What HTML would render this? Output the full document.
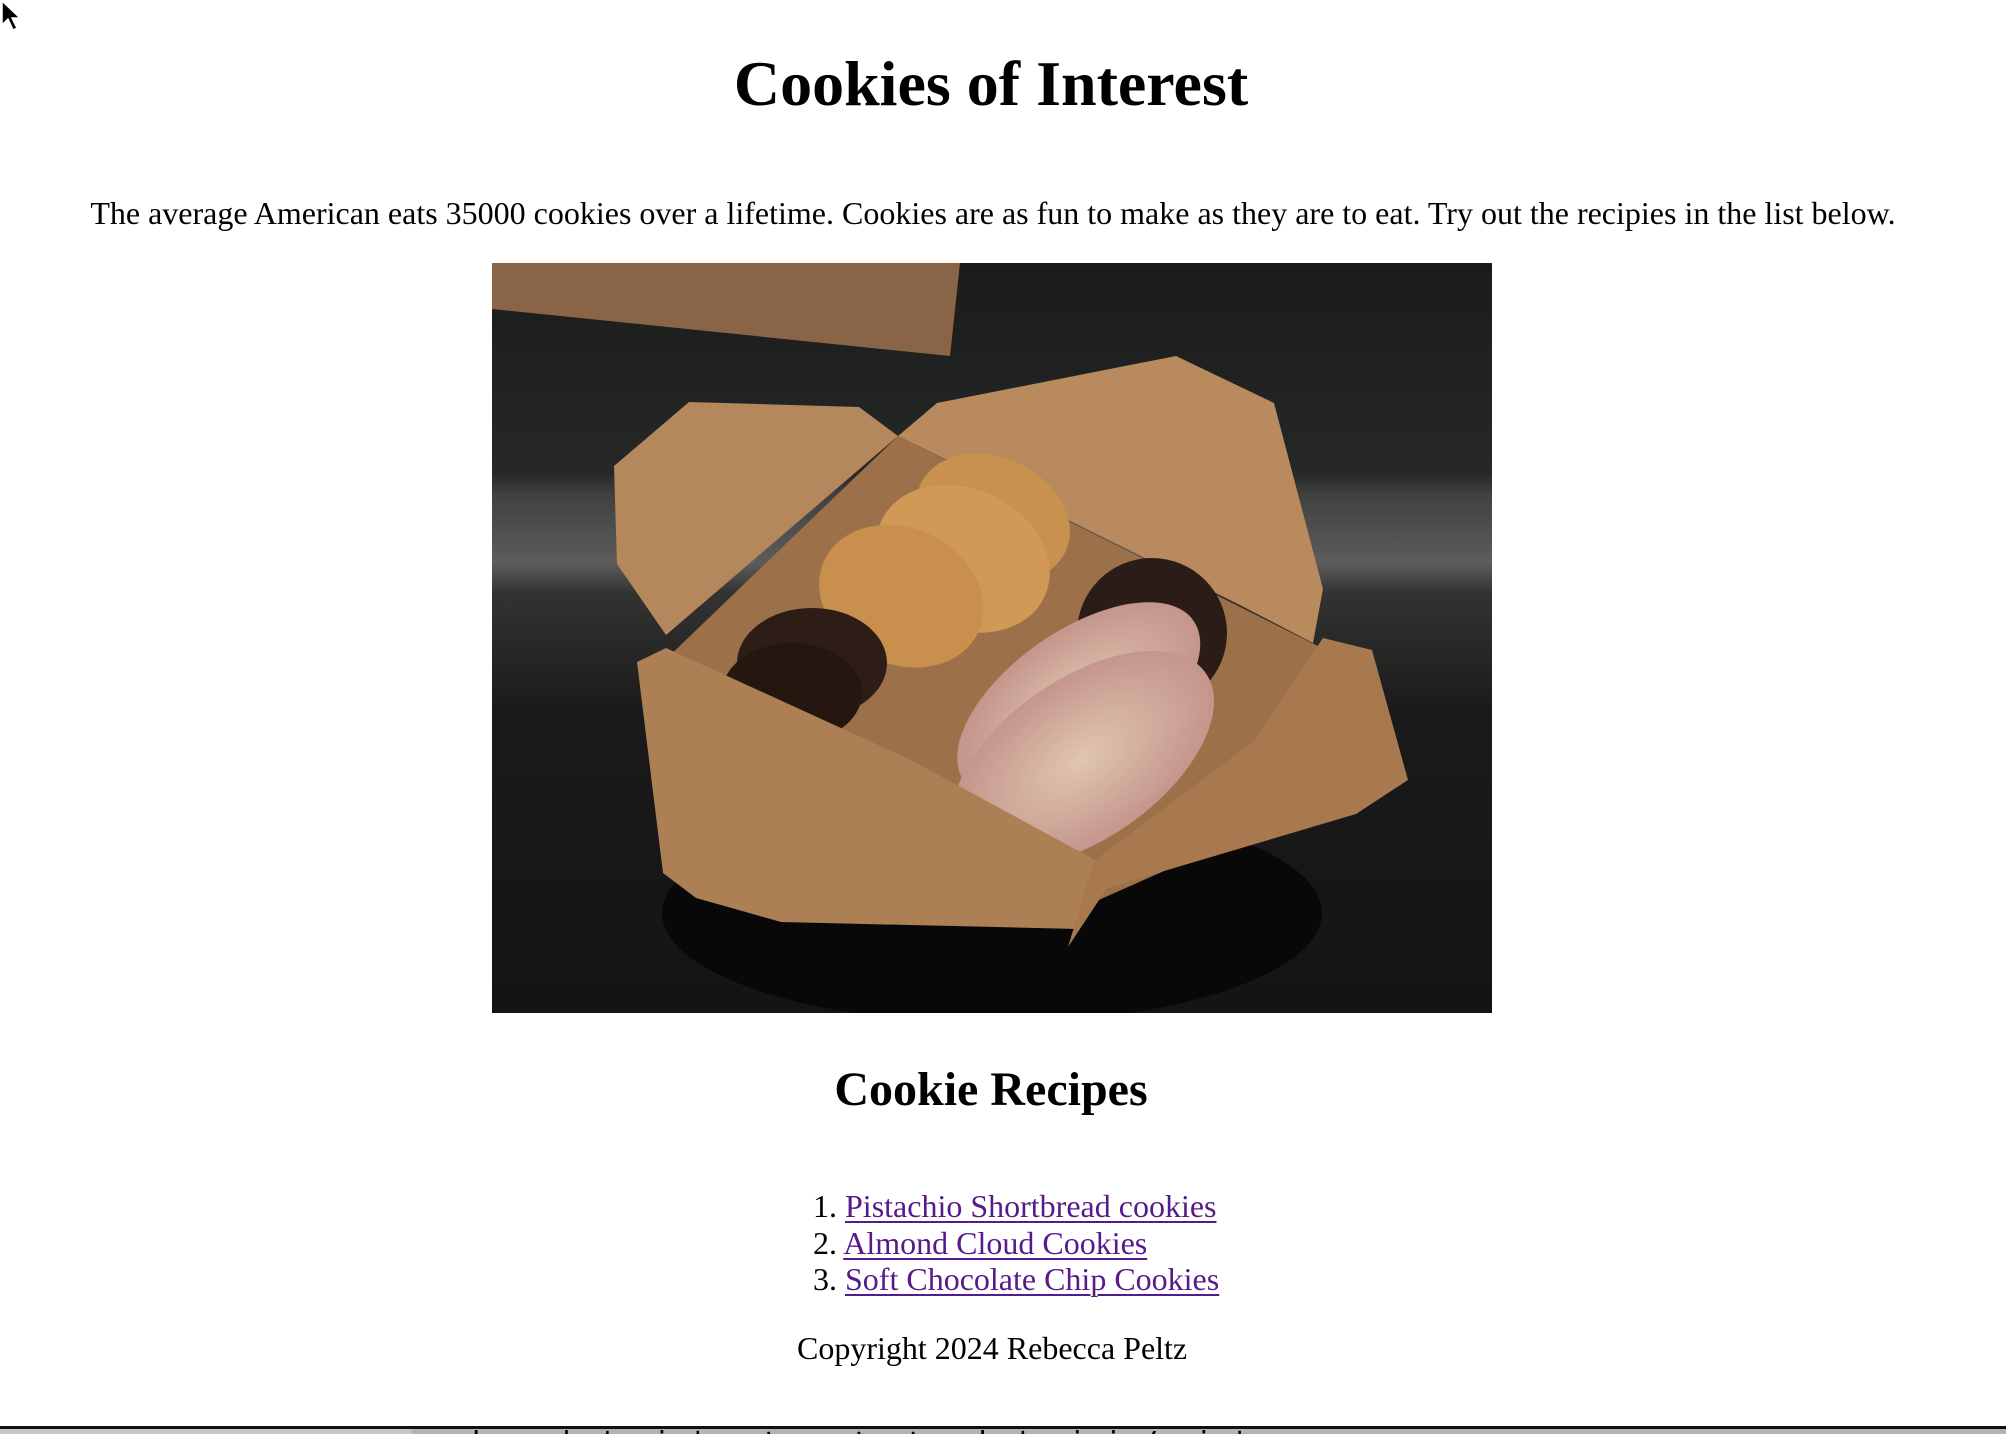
<!DOCTYPE html>
<html><head><meta charset="utf-8"><style>
html,body{margin:0;padding:0;background:#fff;width:2006px;height:1434px;overflow:hidden;position:relative;font-family:"Liberation Serif",serif;color:#000}
.a{position:absolute;line-height:1;white-space:nowrap}
.c{left:0;width:1982px;text-align:center}
a{color:#551A8B;text-decoration:underline;text-decoration-thickness:2px;text-underline-offset:4px}
</style></head><body>
<svg class="a" style="left:0;top:0" width="30" height="34" viewBox="0 0 30 34"><path d="M2 1 L2 25 L8 19 L13 30 L17 28 L12 18 L20 18 Z" fill="#000" stroke="#fff" stroke-width="1.5"/></svg>
<div class="a c" style="top:52px;font-size:64px;font-weight:bold">Cookies of Interest</div>
<div class="a c" style="top:197px;left:2px;font-size:32px">The average American eats 35000 cookies over a lifetime. Cookies are as fun to make as they are to eat. Try out the recipies in the list below.</div>
<svg class="a" style="left:492px;top:263px" width="1000" height="750" viewBox="0 0 1000 750">
<defs>
<linearGradient id="bg" x1="0" y1="0" x2="0" y2="1">
<stop offset="0" stop-color="#1a1c1b"/><stop offset="0.28" stop-color="#252826"/><stop offset="0.31" stop-color="#404240"/><stop offset="0.40" stop-color="#5c5d5a"/><stop offset="0.44" stop-color="#333332"/><stop offset="0.6" stop-color="#1a1a1a"/><stop offset="1" stop-color="#141414"/>
</linearGradient>
<radialGradient id="spr" cx="0.5" cy="0.5" r="0.5"><stop offset="0" stop-color="#e0c6b0"/><stop offset="1" stop-color="#c4958c"/></radialGradient>
</defs>
<rect width="1000" height="750" fill="url(#bg)"/>
<polygon points="0,0 468,0 458,93 0,46" fill="#8a6446"/>
<ellipse cx="500" cy="650" rx="330" ry="110" fill="#080808"/>
<polygon points="406,173 830,385 780,560 600,640 420,620 170,400" fill="#9c7048"/>
<polygon points="122,203 197,139 367,144 406,173 174,372 125,301" fill="#b5875c"/>
<polygon points="406,173 445,140 684,93 782,140 831,326 821,380 746,341" fill="#b88a5e"/>
<g transform="rotate(25 480 300)">
<ellipse cx="480" cy="250" rx="80" ry="60" fill="#c8924e"/>
<ellipse cx="470" cy="300" rx="90" ry="70" fill="#d09a56"/>
<ellipse cx="430" cy="360" rx="85" ry="68" fill="#c98f4c"/>
</g>
<ellipse cx="320" cy="400" rx="75" ry="55" fill="#2e1d17"/>
<ellipse cx="300" cy="430" rx="70" ry="50" fill="#25160f"/>
<ellipse cx="660" cy="370" rx="75" ry="75" fill="#2b1c17"/>
<g transform="rotate(-35 590 460)">
<ellipse cx="600" cy="440" rx="140" ry="70" fill="url(#spr)"/>
<ellipse cx="570" cy="490" rx="150" ry="80" fill="url(#spr)"/>
</g>
<polygon points="145,399 174,385 419,497 605,598 586,666 289,659 204,635 171,610" fill="#ad7f55"/>
<polygon points="602,598 762,478 831,375 880,387 916,517 864,551 615,625 576,684" fill="#a8794f"/>
</svg>
<div class="a c" style="top:1066px;font-size:48px;font-weight:bold">Cookie Recipes</div>
<div class="a" style="left:813px;top:1190px;font-size:32px">1. <a>Pistachio Shortbread cookies</a></div>
<div class="a" style="left:813px;top:1227px;font-size:32px">2. <a>Almond Cloud Cookies</a></div>
<div class="a" style="left:813px;top:1263px;font-size:32px">3. <a>Soft Chocolate Chip Cookies</a></div>
<div class="a" style="left:797px;top:1332px;font-size:32px">Copyright 2024 Rebecca Peltz</div>
<div class="a" style="left:0;top:1426px;width:2006px;height:3px;background:#111"></div>
<div class="a" style="left:0;top:1429px;width:2006px;height:5px;background:#b3b3b3"></div>
<div class="a" style="left:0;top:1429px;width:412px;height:5px;background:#c6c6c6"></div>
<div class="a" style="left:472px;top:1429px;height:5px;overflow:hidden;font-family:'DejaVu Sans Mono',monospace;font-size:30px;line-height:30px;color:#000">branch 'main' set up to track 'origin/main'</div>
</body></html>
